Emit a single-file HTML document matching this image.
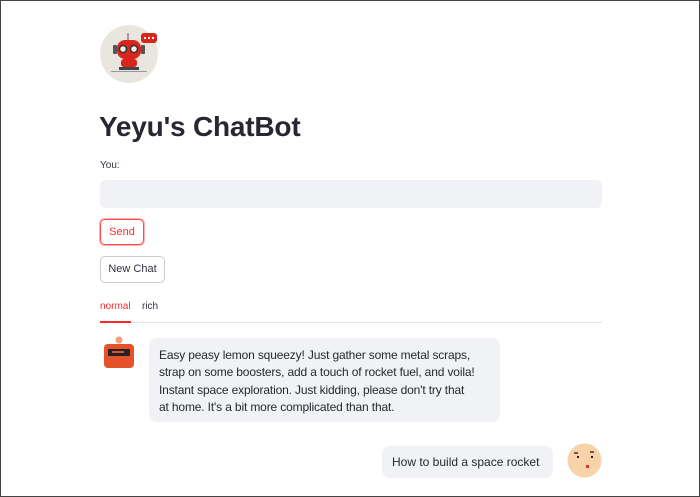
<!DOCTYPE html><html><head><style>
body{margin:0;width:700px;height:497px;overflow:hidden;background:#fff;font-family:"Liberation Sans",sans-serif;color:#31333f}
.frame{position:absolute;left:0;top:0;width:698px;height:495px;border:1px solid #444}
.a{position:absolute}
.bub{background:#f0f2f6;border-radius:8px;font-size:12px;line-height:17.3px;color:#262730;white-space:nowrap}
</style></head><body><div class="frame"></div>
<div class="a" style="left:100px;top:25px;width:58px;height:58px;border-radius:50%;background:#e9e5df"></div>
<svg class="a" style="left:100px;top:25px" width="62" height="58">
<rect x="41" y="8" width="16" height="10" rx="3" fill="#d9261c"/>
<circle cx="45" cy="13" r="1.1" fill="#fff"/><circle cx="49" cy="13" r="1.1" fill="#fff"/><circle cx="53" cy="13" r="1.1" fill="#fff"/>
<line x1="28" y1="8" x2="28" y2="15" stroke="#555"/>
<rect x="17" y="15" width="24" height="19" rx="8" fill="#d9261c"/>
<rect x="13" y="20" width="4" height="9" rx="1" fill="#555"/><rect x="41" y="20" width="4" height="9" rx="1" fill="#555"/>
<circle cx="23" cy="24" r="3.5" fill="#eee" stroke="#333" stroke-width="1.5"/><circle cx="34" cy="24" r="3.5" fill="#eee" stroke="#333" stroke-width="1.5"/>
<rect x="21" y="34" width="16" height="8" rx="3" fill="#d9261c"/>
<rect x="19" y="42" width="20" height="3" fill="#444"/><rect x="11" y="46" width="36" height="1" fill="#999"/>
</svg>
<div class="a" style="left:99px;top:111px;font-size:28px;font-weight:bold;color:#262730;letter-spacing:-0.2px">Yeyu's ChatBot</div>
<div class="a" style="left:100px;top:160px;font-size:10px">You:</div>
<div class="a" style="left:100px;top:180px;width:502px;height:28px;background:#f0f2f6;border-radius:6px"></div>
<div class="a" style="left:100px;top:219px;width:42px;height:24px;border:1px solid #ff4b4b;box-shadow:0 0 0 1px #ffb0b0;border-radius:5px;color:#ff2b2b;font-size:11px;text-align:center;line-height:24px">Send</div>
<div class="a" style="left:100px;top:256px;width:63px;height:25px;border:1px solid #ccc;border-radius:5px;font-size:11px;text-align:center;line-height:25px">New Chat</div>
<div class="a" style="left:100px;top:301px;font-size:10px;color:#ff2b2b">normal</div>
<div class="a" style="left:142px;top:301px;font-size:10px">rich</div>
<div class="a" style="left:100px;top:322px;width:502px;height:1px;background:#e4e4e8"></div>
<div class="a" style="left:100px;top:321px;width:31px;height:2px;background:#ff2b2b"></div>
<svg class="a" style="left:103px;top:335px" width="32" height="34">
<circle cx="16" cy="5" r="3.5" fill="#f0a07a"/>
<rect x="1" y="9" width="30" height="24" rx="4" fill="#e5522a"/>
<rect x="5" y="14" width="22" height="7" rx="1" fill="#222"/><rect x="9" y="16" width="12" height="2" fill="#e5522a"/>
</svg>
<div class="a bub" style="left:149px;top:338px;width:331px;height:66px;padding:9px 10px;letter-spacing:-0.15px">Easy peasy lemon squeezy! Just gather some metal scraps,<br>strap on some boosters, add a touch of rocket fuel, and voila!<br>Instant space exploration. Just kidding, please don't try that<br>at home. It's a bit more complicated than that.</div>
<div class="a bub" style="left:382px;top:446px;width:151px;height:32px;padding:0 10px;line-height:32px">How to build a space rocket</div>
<svg class="a" style="left:567px;top:443px" width="35" height="35">
<circle cx="17.5" cy="17.5" r="17" fill="#f8d2a8"/>
<path d="M7 10h4M23 9h4" stroke="#5a2a1a" stroke-width="1.5"/>
<rect x="10" y="13" width="2" height="2" fill="#222"/><rect x="24" y="13" width="2" height="2" fill="#222"/>
<rect x="19" y="22" width="3" height="3" fill="#d33"/>
</svg>
</body></html>
